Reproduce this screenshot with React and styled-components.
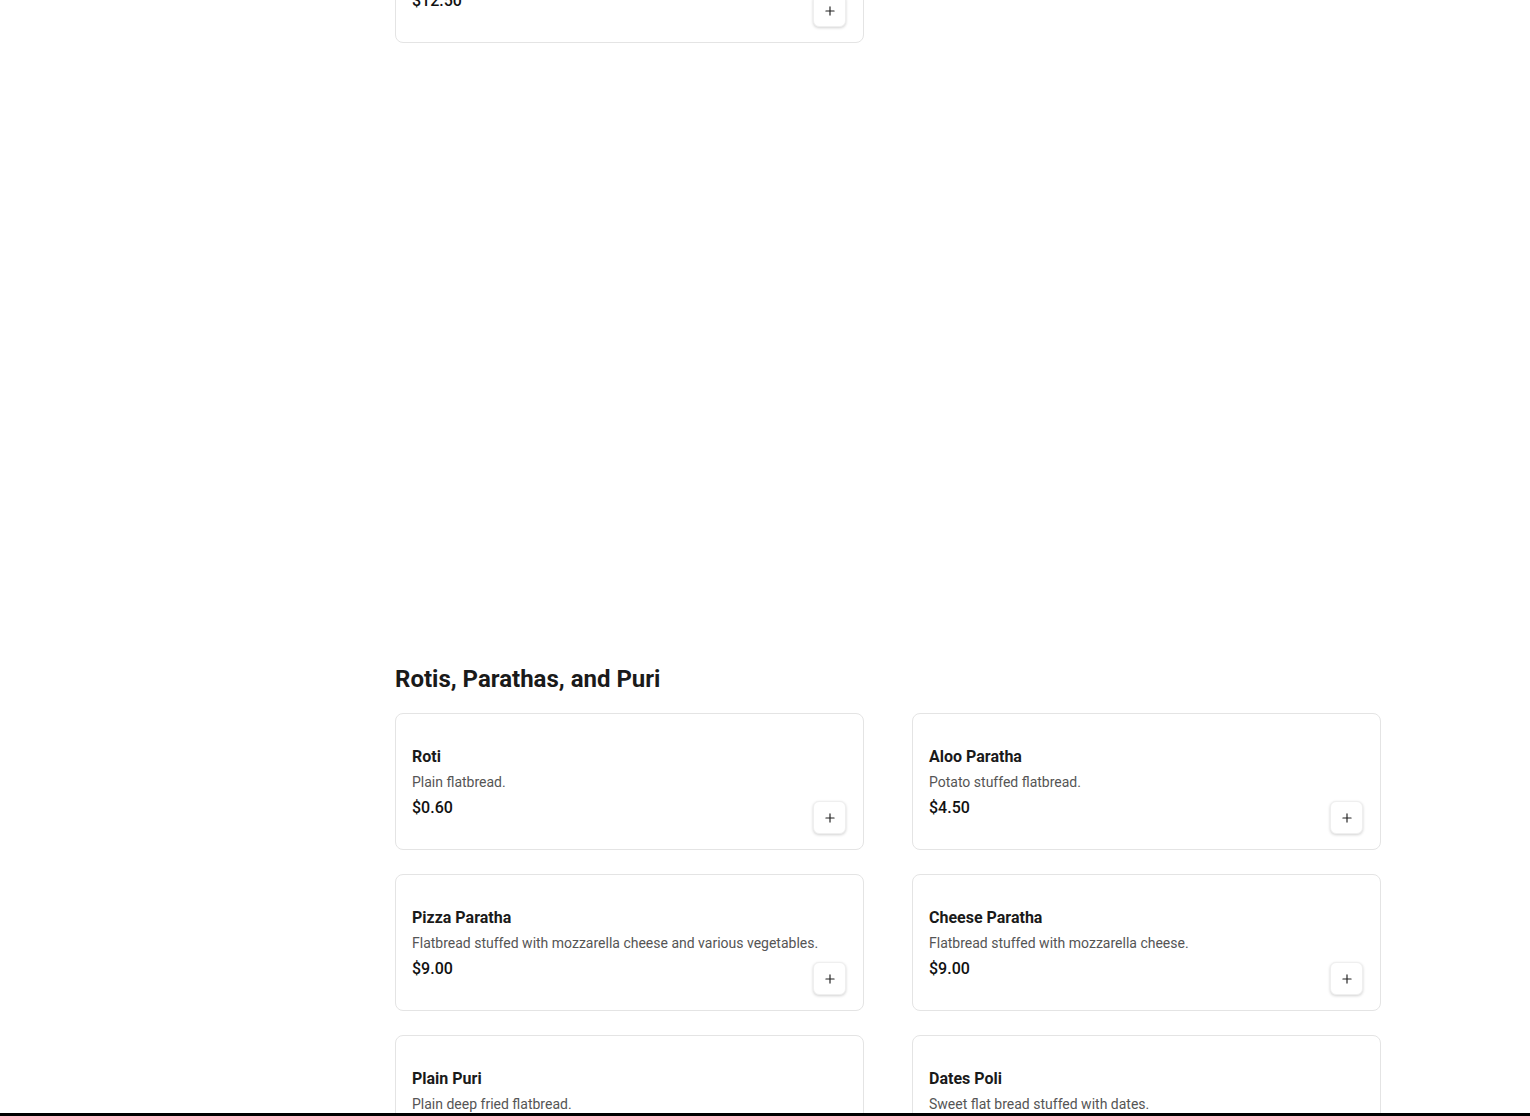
import styled, { createGlobalStyle } from 'styled-components';
import { Plus } from 'lucide-react';

const GlobalStyle = createGlobalStyle`
  * {
    box-sizing: border-box;
  }

  body {
    margin: 0;
    background: #fff;
    font-family: Roboto, "Liberation Sans", Arial, sans-serif;
    color: #1a1a1a;
  }
`;

const Page = styled.main`
  padding-left: 395px;
  width: 1381px;
  margin-top: -94px;
`;

const Section = styled.section`
  padding-bottom: ${(p) => p.$space || 0}px;
`;

const SectionTitle = styled.h2`
  font-size: 24px;
  line-height: 32px;
  font-weight: 700;
  margin: 0 0 18px;
  color: #1a1a1a;
`;

const Grid = styled.div`
  display: grid;
  grid-template-columns: 1fr 1fr;
  column-gap: 48px;
  row-gap: 24px;
`;

/* info and button share one grid cell, button sits in its bottom-right corner */
const Card = styled.div`
  display: grid;
  grid-template-areas: 'stack';
  border: 1px solid #e4e4e4;
  border-radius: 8px;
  background: #fff;
  padding: 31px 17px 15px 16px;
`;

const Info = styled.div`
  grid-area: stack;
  display: flex;
  flex-direction: column;
  padding-bottom: 14px;
`;

const Name = styled.h3`
  font-size: 16px;
  line-height: 24px;
  font-weight: 700;
  margin: 0;
  color: #1a1a1a;
`;

const Desc = styled.p`
  font-size: 14px;
  line-height: 20px;
  margin: 3px 0 0;
  color: #555;
`;

const Price = styled.span`
  font-size: 16px;
  line-height: 24px;
  font-weight: 500;
  margin-top: 4px;
  color: #111;
`;

const AddButton = styled.button`
  grid-area: stack;
  align-self: end;
  justify-self: end;
  width: 33px;
  height: 33px;
  display: flex;
  align-items: center;
  justify-content: center;
  padding: 0;
  border: 1px solid #efefef;
  border-radius: 6px;
  background: #fff;
  color: #222;
  box-shadow: 0 1px 3px rgba(0, 0, 0, 0.18);
  cursor: pointer;
`;

const BottomStrip = styled.div`
  position: fixed;
  left: 0;
  right: 0;
  bottom: 0;
  height: 3px;
  background: #000;
`;

const previous = [
  { name: 'Chole Bhature', desc: 'Chickpea curry served with fried bread.', price: '$12.50' },
];

const breads = [
  { name: 'Roti', desc: 'Plain flatbread.', price: '$0.60' },
  { name: 'Aloo Paratha', desc: 'Potato stuffed flatbread.', price: '$4.50' },
  { name: 'Pizza Paratha', desc: 'Flatbread stuffed with mozzarella cheese and various vegetables.', price: '$9.00' },
  { name: 'Cheese Paratha', desc: 'Flatbread stuffed with mozzarella cheese.', price: '$9.00' },
  { name: 'Plain Puri', desc: 'Plain deep fried flatbread.', price: '$2.00' },
  { name: 'Dates Poli', desc: 'Sweet flat bread stuffed with dates.', price: '$4.00' },
];

function MenuItem({ item }) {
  return (
    <Card>
      <Info>
        <Name>{item.name}</Name>
        <Desc>{item.desc}</Desc>
        <Price>{item.price}</Price>
      </Info>
      <AddButton aria-label={`Add ${item.name}`}>
        <Plus size={14} strokeWidth={2} />
      </AddButton>
    </Card>
  );
}

export default function App() {
  return (
    <>
      <GlobalStyle />
      <Page>
        <Section $space={620}>
          <Grid>
            {previous.map((item) => (
              <MenuItem key={item.name} item={item} />
            ))}
          </Grid>
        </Section>
        <Section>
          <SectionTitle>Rotis, Parathas, and Puri</SectionTitle>
          <Grid>
            {breads.map((item) => (
              <MenuItem key={item.name} item={item} />
            ))}
          </Grid>
        </Section>
      </Page>
      <BottomStrip />
    </>
  );
}
